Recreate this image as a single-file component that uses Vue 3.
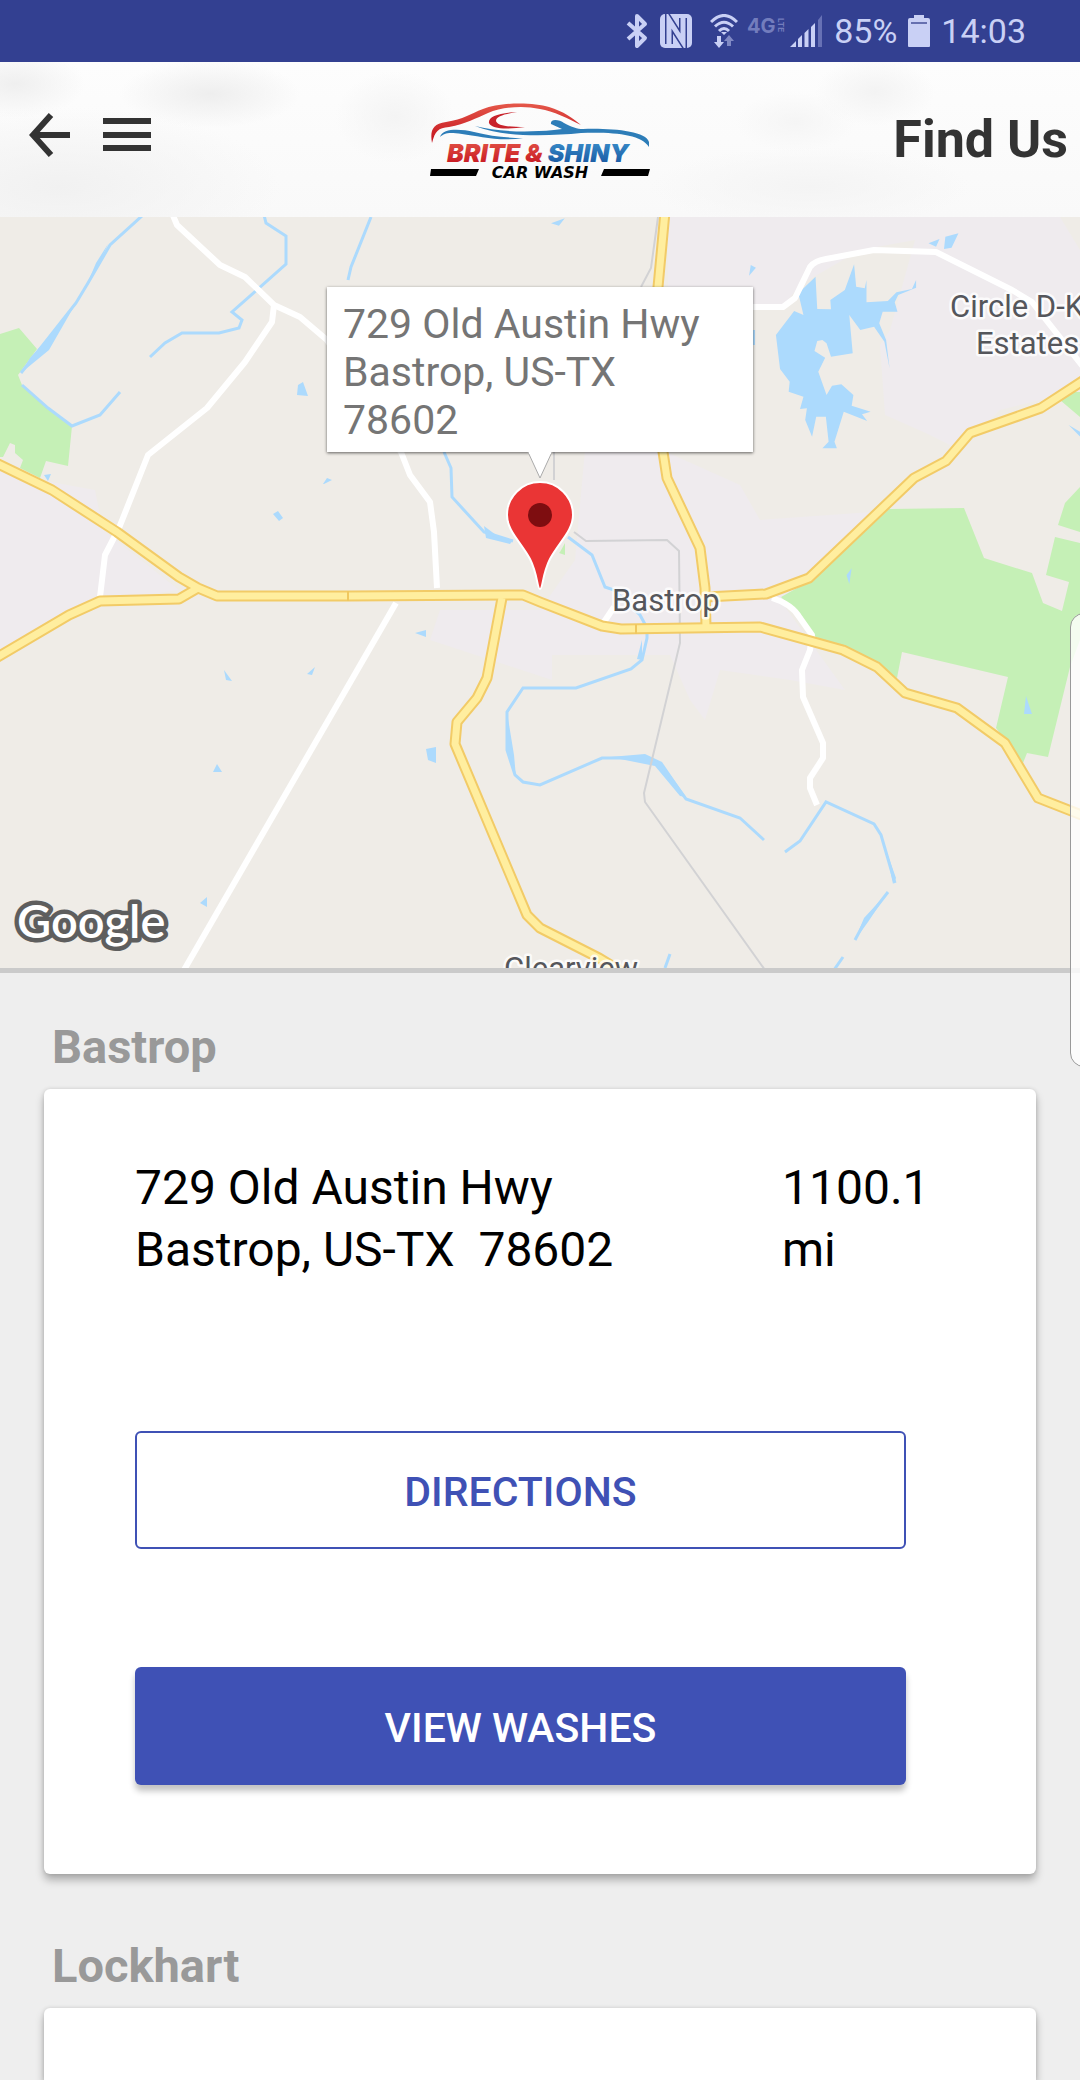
<script setup>
const roads = [
  'M502 598L487 678L477 698L457 722L455 744L527 915L540 928L599 958L622 972',
  'M665 212L658 287L663 452L667 478L700 548L705 588L706 627',
  'M706 597L766 594L809 578L914 478L946 461L970 433L1041 408L1084 380',
  'M198 588L179 599L100 601L69 615L-4 658',
  'M-4 463L52 490L117 532L179 577L198 588L217 596L348 596L523 595L540 602L602 626L621 629L760 627L843 650L877 667L905 693L957 708L1005 743L1038 798L1084 816'
]
const streets = [
  'M172 213L177 225L220 265L245 277L274 305L300 317L327 340L401 452L410 475L430 502L434 532L437 588',
  'M274 305L272 322L245 362L207 408L148 455L119 528L105 555L100 597',
  'M184 970L396 603',
  'M740 307H783L795 298L810 267Q814 261 826 259L874 250L936 252L1012 290L1032 302L1084 368',
  'M772 598Q792 604 800 618L812 635L810 650L802 670L803 697L823 743V758L810 778V788L817 805',
  'M604 622L614 607'
]
const rivers = [
  'M143 215L110 245L88 283L76 303L21 373',
  'M22 385L48 408L72 426L100 415L120 392',
  'M264 215L266 223L286 236V264L232 312L242 320L239 328L219 333H182L165 343L150 357',
  'M371 217L351 267L348 280',
  'M444 452L451 468L452 497L484 532L513 541',
  'M568 537L592 555L605 587L614 590L640 615L647 628V638L642 660L631 669L576 688H523L507 712V750L515 775L523 782L540 785L602 758H647L661 765L686 799L740 818L764 840',
  'M785 852L800 841L826 802L874 824L881 835L895 883M888 892L864 923L855 940M843 957L834 970M670 954L665 968'
]
const callout = ['729 Old Austin Hwy', 'Bastrop, US-TX', '78602']
</script>

<template>
  <div class="app">
    <div class="status">
      <svg width="22" height="36" viewBox="0 0 22 36"><path d="M2 10L19 25L11 33V3L19 11L2 26" fill="none" stroke="#c9d0f5" stroke-width="4" stroke-linejoin="round" /></svg>
      <svg class="nfc" width="32" height="34" viewBox="0 0 32 34">
        <rect width="32" height="34" rx="5" fill="#c9d0f5" />
        <path d="M9 30V6L23 28V4" fill="none" stroke="#334091" stroke-width="8" />
        <path d="M9 34V6L23 28V0" fill="none" stroke="#c9d0f5" stroke-width="5" />
      </svg>
      <svg class="wifi" width="28" height="34" viewBox="0 0 28 34">
        <g fill="none" stroke="#c9d0f5" stroke-width="3"><path d="M1 8Q14 -5 27 8" /><path d="M5 12.500Q14 4 23 12.500" /><path d="M9 17Q14 12 19 17" /></g>
        <path d="M11 18H17L14 21ZM7 22H11V28H14L9 34L4 28H7Z" fill="#c9d0f5" />
        <path d="M17 32V27H14L19 21L24 27H21V32Z" fill="#8089c4" />
      </svg>
      <svg class="lte" width="40" height="24" viewBox="0 0 40 24" fill="#737dbd"><text x="0" y="19" class="four">4G</text><text transform="translate(31 4) rotate(90)" class="tiny">LTE</text></svg>
      <svg width="34" height="34" viewBox="0 0 34 34">
        <path d="M0 33L6 27V33ZM8 25L12 21V33H8ZM14.500 19L18.500 15V33H14.500ZM21 13L25 9V33H21Z" fill="#c9d0f5" />
        <path d="M28 6L32 1V33H28Z" fill="#6771b5" />
      </svg>
      <span class="pct">85%</span>
      <svg width="22" height="34" viewBox="0 0 22 34"><path d="M6 1H16V4H20Q22 4 22 6V32Q22 33 21 33H1Q0 33 0 32V6Q0 4 2 4H6Z" fill="#c9d0f5" /><path d="M3 9H19" stroke="#6670b0" stroke-width="2" /></svg>
      <span class="time">14:03</span>
    </div>

    <header class="bar">
      <nav class="nav">
        <button aria-label="Back"><svg width="42" height="44" viewBox="0 0 42 44"><path d="M41 22H4M22 2L4 22L22 42" fill="none" stroke="#333" stroke-width="6" /></svg></button>
        <button aria-label="Menu"><svg width="48" height="36" viewBox="0 0 48 36"><path d="M0 4H48M0 18H48M0 31H48" stroke="#333" stroke-width="6" /></svg></button>
      </nav>
      <svg class="logo" width="220" height="80" viewBox="0 -2 220 80" role="img" aria-label="Brite &amp; Shiny Car Wash">
        <defs>
          <linearGradient id="red" x1="0" y1="0" x2="0" y2="1"><stop offset="0" stop-color="#e5584a" /><stop offset="1" stop-color="#c3101c" /></linearGradient>
          <linearGradient id="blue" x1="0" y1="0" x2="0" y2="1"><stop offset="0" stop-color="#3d94cf" /><stop offset="1" stop-color="#15509c" /></linearGradient>
        </defs>
        <path d="M2 41C0 29 2 22 16 20C34 17 40 12 53 7C70 0 103 0 119 5C133 9 144 17 151 23C139 17 123 9 110 7C93 3 72 5 58 11C46 16 36 22 19 25C8 26 5 29 2 41Z" fill="url(#red)" />
        <path d="M87 10C68 11 58 15 59 21C62 28 80 27 95 25C80 25 67 24 66 19C66 14 76 12 87 10Z" fill="#c8222b" />
        <path d="M45 24C66 29 91 31 124 28L132 27L121 22C120 16 130 18 134 21C142 25 147 27 153 27C181 26 216 29 219 40V45C211 32 183 30 151 31C120 34 75 36 45 24Z" fill="#2d7db8" />
        <path d="M10 35C13 26 30 27 44 30C61 34 75 36 93 36C70 40 48 34 32 32C18 30 15 31 10 35Z" fill="#2d7db8" />
        <text x="108" y="60" text-anchor="middle" class="brand"><tspan fill="url(#red)">BRITE &amp;</tspan><tspan fill="url(#blue)"> SHINY</tspan></text>
        <path d="M1 67H49L46 74H0ZM174 67H220L218 74H171Z" fill="#000" />
        <text x="110" y="76" text-anchor="middle" class="wash">CAR WASH</text>
      </svg>
      <h1>Find Us</h1>
    </header>

    <section class="map">
      <svg class="canvas" viewBox="0 217 1080 751" preserveAspectRatio="xMidYMid slice">
        <rect x="-500" y="217" width="2080" height="751" fill="#efece7" />
        <g fill="#efebee">
          <path d="M0 468L40 480L95 490L103 530L179 590L100 601L0 655Z" />
          <path d="M668 217H1060L1080 250V390L1000 410L960 450L930 435L885 415L880 345L890 330L915 240L860 250L800 285L780 310H668Z" />
          <path d="M585 450H662L740 485L760 520L900 510L780 600L845 690L790 680L720 670L705 720L690 700L670 655H552V680L430 640L440 610H540L575 560Z" />
        </g>
        <g fill="#c5f0b6">
          <path d="M0 334L19 328L37 349L18 375L22 385L48 408L72 426L68 466L46 461L40 478L20 468L23 460L15 453V445L10 443L3 457H0Z" />
          <path d="M889 509L964 508L984 558L1032 573L1043 603L1062 611L1069 582L1046 575L1055 537L1080 543V640L1070 667L1048 757L1027 753L1023 763L996 728L1008 677L902 652L897 678L877 665L812 635L797 613L781 597L815 578Z" />
          <path d="M1060 400L1072 392H1080V417ZM1065 503L1080 487V532L1058 525ZM560 552L565 543V555L559 553Z" />
        </g>
        <g fill="#acdafd">
          <g transform="translate(540 215) scale(.3444 .3333)">
            <path d="M750 235L800 185L805 282L845 283L843 255L885 225L912 148L918 215L943 220L948 195V262L1010 258L1035 232L1080 222L1092 195V218L1040 240L1030 262L1038 290H995L985 325L1005 375L1015 460L1000 380L970 335L930 345L898 300L908 415L845 425L832 385L820 375L805 378L797 408L828 428L808 470L832 540L848 512L875 508L910 540L905 572L960 590L935 598L950 618L882 590L855 680L862 700H820L838 680L830 605H802L790 665L770 615L775 580L755 582L765 545L722 530L725 500L697 462L685 360L738 288L765 300Z" />
            <path d="M1128 85L1160 72L1150 95ZM1177 65L1215 55L1195 98L1173 102ZM612 150L627 158L607 182ZM32 25L72 10L55 32ZM890 1080L905 1060L898 1107ZM1535 630L1568 650V665Z" />
          </g>
          <path d="M298 385L303 382L308 396L297 395ZM273 514L278 511L283 518L279 521ZM323 484L327 478L332 480L324 484ZM44 475L51 474L48 481ZM415 633L426 630V637ZM224 670L232 681L226 680ZM307 674L315 667L312 675ZM426 749L436 747V763L428 760ZM213 772L217 764L222 772ZM200 903L207 897V907ZM1024 714L1026 696L1032 714ZM753 330H755V345H753Z" />
          <path d="M76 303L57 328L30 358L21 373L49 350ZM507 712L514 755L516 777L506 750ZM610 757L645 754L662 762L686 797L680 796L655 766ZM484 526L500 538L513 540L510 544L486 538ZM886 850L896 878L893 884ZM888 892L864 918L855 940L868 922ZM642 640L637 659L642 660ZM108 244L96 263L88 282L100 262Z" />
        </g>
        <g fill="none" stroke="#acdafd" stroke-width="3"><path v-for="d in rivers" :key="d" :d="d" /></g>
        <g fill="none" stroke="#d2d2d4" stroke-width="2"><path d="M554 452V480M574 532L586 541L667 540L679 551L680 643L644 793L645 802L765 970M658 217L651 268L641 287" /></g>
        <g fill="none" stroke="#fff" stroke-width="6" stroke-linejoin="round"><path v-for="d in streets" :key="d" :d="d" /></g>
        <g fill="none" stroke="#f2cb67" stroke-width="11" stroke-linejoin="round"><path v-for="d in roads" :key="d" :d="d" /></g>
        <g fill="none" stroke="#ffee9f" stroke-width="7" stroke-linejoin="round"><path v-for="d in roads" :key="d" :d="d" /></g>
        <path d="M348 591V601M636 624V634" stroke="#f0c860" stroke-width="2" />
        <g class="place"><text x="612" y="611">Bastrop</text><text x="950" y="317">Circle D-K</text><text x="976" y="354">Estates</text><text x="504" y="979">Clearview</text></g>
        <text x="17" y="938" class="google">Google</text>
        <path d="M540 589C537 589 538 575 530 559C521 542 507 531 507 515A33 33 0 0 1 573 515C573 531 559 542 550 559C542 575 543 589 540 589Z" fill="#ea3535" stroke="#fff" stroke-width="2" />
        <circle cx="540" cy="515" r="12" fill="#7e0d10" />
      </svg>
      <div class="callout">
        <div v-for="line in callout" :key="line">{{ line }}</div>
        <svg class="tail" width="26" height="28" viewBox="0 0 26 28"><path d="M1 0L13 26L25 0" fill="#fff" stroke="#aaa" stroke-width="1" /><path d="M2 0H24" stroke="#fff" stroke-width="4" /></svg>
      </div>
    </section>

    <main class="list">
      <h2>Bastrop</h2>
      <article class="card">
        <div class="row">
          <address>729 Old Austin Hwy<br />Bastrop, US-TX&nbsp; 78602</address>
          <span class="miles">1100.1 mi</span>
        </div>
        <button class="btn outline">DIRECTIONS</button>
        <button class="btn solid">VIEW WASHES</button>
      </article>
      <h2>Lockhart</h2>
      <article class="card next"></article>
    </main>
    <div class="edge"></div>
  </div>
</template>

<style>
body {
  margin: 0;
  background: #eee;
}
</style>

<style scoped>
.app {
  position: relative;
  display: flex;
  flex-direction: column;
  min-height: 100vh;
  overflow: hidden;
  background: #eee;
  font-family: Roboto, "Liberation Sans", sans-serif;
}
svg { display: block; flex: none; }
button {
  margin: 0;
  padding: 0;
  border: 0;
  background: none;
  font-family: inherit;
}
.status {
  display: flex;
  align-items: center;
  justify-content: flex-end;
  height: 62px;
  padding-right: 54px;
  background: #334091;
  color: #c9d0f5;
  font-size: 34px;
}
.nfc { margin: 0 18px 0 12px; }
.lte { margin: 0 3px 10px 9px; }
.pct { margin: 0 11px 0 10px; }
.time { margin-left: 11px; }
.four { font: 700 20px Inter, sans-serif; }
.tiny { font: 700 8px Inter, sans-serif; }
.bar {
  display: grid;
  grid-template-columns: 1fr auto 1fr;
  align-items: center;
  height: 155px;
  background:
    radial-gradient(ellipse 90px 34px at 210px 32px, #eee, transparent),
    radial-gradient(ellipse 70px 34px at 15px 22px, #efefef, transparent),
    radial-gradient(ellipse 60px 46px at 395px 55px, #f4f4f4, transparent),
    radial-gradient(ellipse 60px 34px at 875px 30px, #f3f3f3, transparent),
    radial-gradient(ellipse 60px 30px at 795px 60px, #f5f5f5, transparent),
    radial-gradient(ellipse 160px 40px at 810px 125px, #f4f4f4, transparent),
    radial-gradient(ellipse 220px 80px at 60px 125px, #f1f1f1, transparent),
    linear-gradient(#fdfdfd, #f9f9f9);
}
.nav {
  display: flex;
  align-items: center;
  gap: 32px;
  padding-left: 29px;
  padding-bottom: 10px;
}
.brand { font: italic 900 25px Inter, sans-serif; }
.wash { font: italic 700 16px "DejaVu Sans", sans-serif; }
h1 {
  margin: 0;
  padding-right: 12px;
  text-align: right;
  color: #333;
  font-size: 52px;
  line-height: 60px;
  font-weight: 700;
}
.map {
  position: relative;
  border-bottom: 5px solid #cacaca;
}
.canvas {
  width: 100%;
  height: 751px;
}
.place text {
  font: 400 31px Roboto, sans-serif;
  fill: #55565b;
  stroke: #fff;
  stroke-opacity: 0.8;
  stroke-width: 5px;
  stroke-linejoin: round;
  paint-order: stroke;
}
.google {
  font: 600 47px Lato, sans-serif;
  fill: #fff;
  stroke: #5e5e5e;
  stroke-width: 9px;
  stroke-linejoin: round;
  paint-order: stroke;
}
.callout {
  position: absolute;
  top: 70px;
  left: 50%;
  box-sizing: border-box;
  width: 426px;
  margin-left: -213px;
  padding: 13px 16px 8px;
  background: #fff;
  box-shadow: 0 1px 3px rgba(0, 0, 0, 0.6);
  color: #757575;
  font-size: 41px;
  line-height: 48px;
}
.tail {
  position: absolute;
  top: 100%;
  left: 200px;
}
.list {
  display: flex;
  flex: 1;
  flex-direction: column;
  padding: 0 44px;
}
h2 {
  margin: 46px 8px 14px;
  color: #999;
  font-size: 47px;
  line-height: 56px;
  font-weight: 700;
}
.card {
  margin-bottom: 18px;
  padding: 68px 100px 89px 91px;
  border-radius: 6px;
  background: #fff;
  box-shadow: 0 6px 9px rgba(0, 0, 0, 0.28), 0 0 4px rgba(0, 0, 0, 0.12);
}
.next {
  flex: 1;
  margin-bottom: 0;
  padding: 0;
  min-height: 72px;
  border-radius: 6px 6px 0 0;
}
.row {
  display: flex;
  justify-content: space-between;
  margin-bottom: 150px;
  color: #000;
  font-size: 48px;
  line-height: 62px;
}
address { font-style: normal; }
.miles { width: 154px; }
.btn {
  display: block;
  box-sizing: border-box;
  width: calc(100% - 30px);
  height: 118px;
  padding-top: 3px;
  border-radius: 6px;
  font-size: 41px;
  font-weight: 500;
}
.outline {
  margin-bottom: 118px;
  border: 2px solid #3f51b5;
  color: #3f51b5;
}
.solid {
  background: #3f51b5;
  color: #fff;
  box-shadow: 0 6px 6px rgba(0, 0, 0, 0.24);
}
.edge {
  position: absolute;
  top: 613px;
  right: -20px;
  box-sizing: border-box;
  width: 30px;
  height: 454px;
  border: 1px solid #999;
  border-radius: 14px;
  background: rgba(255, 255, 255, 0.8);
}
</style>
